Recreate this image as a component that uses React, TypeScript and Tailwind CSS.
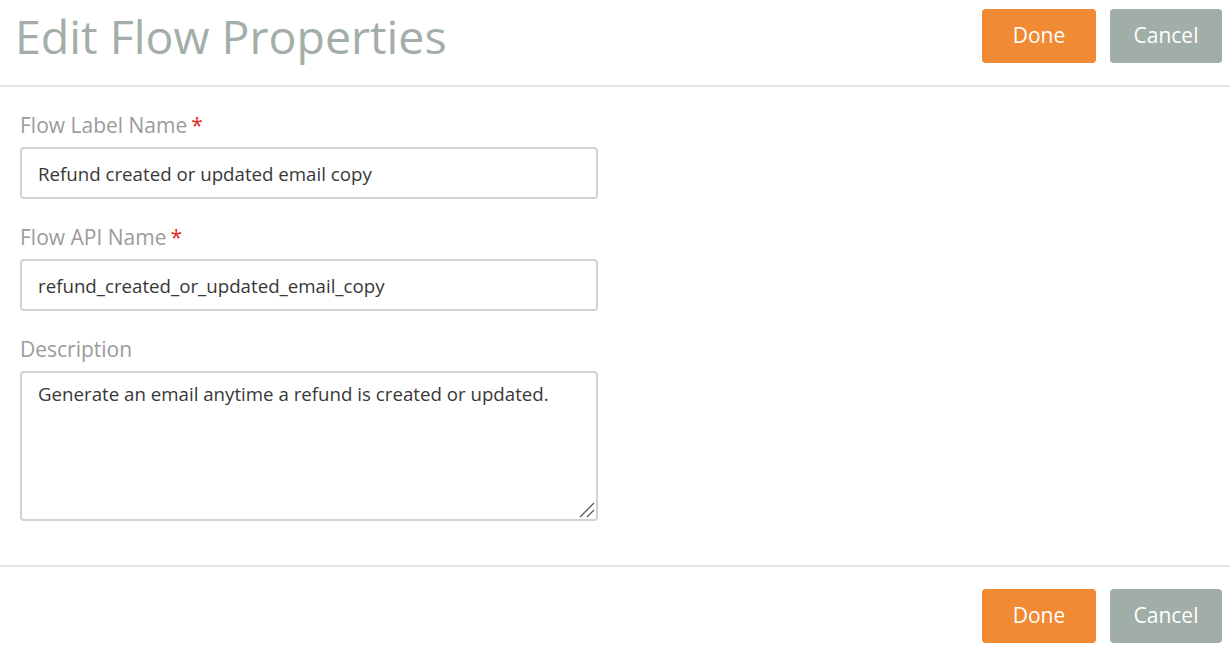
import React from 'react';

function Actions() {
  return (
    <div className="flex gap-[14px]">
      <button className="h-[54px] w-[114px] rounded-[4px] bg-[#f08a34] text-[21px] text-white">Done</button>
      <button className="h-[54px] w-[112px] rounded-[4px] bg-[#a1ada7] text-[21px] text-white">Cancel</button>
    </div>
  );
}

function Label({ text, required }: { text: string; required?: boolean }) {
  return (
    <label className="mb-2 block text-[21px] leading-[28px] text-[#9b9b9b]">
      {text}
      {required && <span className="ml-1 text-[#e3261b]">*</span>}
    </label>
  );
}

export default function App() {
  const field =
    'block w-[578px] rounded-[4px] border-2 border-[#d2d2d2] bg-white px-4 text-[18.7px] text-[#383838] outline-none';

  return (
    <div className="min-h-[655px] w-full bg-white font-['Open_Sans',sans-serif]">
      {/* Header */}
      <div className="flex h-[87px] items-start justify-between border-b-2 border-[#e6e6e6] pl-[15px] pr-2 pt-[9px]">
        <h1 className="text-[46.5px] leading-[54px] text-[#a3aea8]">Edit Flow Properties</h1>
        <Actions />
      </div>

      {/* Form */}
      <div className="flex flex-col gap-6 px-5 pb-11 pt-6">
        <div>
          <Label text="Flow Label Name" required />
          <input className={field + ' h-[52px]'} defaultValue="Refund created or updated email copy" />
        </div>
        <div>
          <Label text="Flow API Name" required />
          <input className={field + ' h-[52px]'} defaultValue="refund_created_or_updated_email_copy" />
        </div>
        <div>
          <Label text="Description" />
          <div className="relative w-[578px]">
            <textarea
              className={field + ' h-[150px] resize-none pt-[7px] leading-[27px]'}
              defaultValue="Generate an email anytime a refund is created or updated."
            />
            {/* resize grip */}
            <svg className="pointer-events-none absolute bottom-[2px] right-[2px]" width="18" height="18" viewBox="0 0 18 18">
              <line x1="2" y1="16" x2="16" y2="2" stroke="#5a5a5a" strokeWidth="1.3" />
              <line x1="9" y1="16" x2="16" y2="9" stroke="#5a5a5a" strokeWidth="1.3" />
            </svg>
          </div>
        </div>
      </div>

      {/* Footer */}
      <div className="flex justify-end border-t-2 border-[#e6e6e6] pr-2 pt-[22px]">
        <Actions />
      </div>
    </div>
  );
}
